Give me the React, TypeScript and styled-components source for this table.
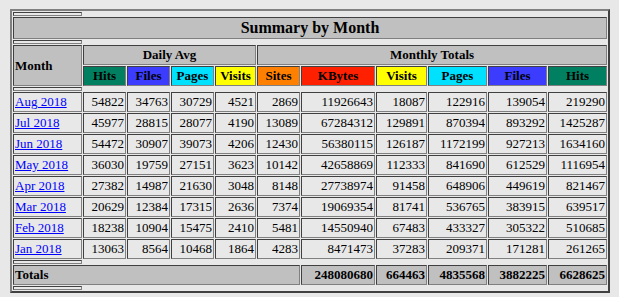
import React from 'react';
import styled, { createGlobalStyle } from 'styled-components';

const GlobalStyle = createGlobalStyle`
  html, body {
    margin: 0;
    padding: 0;
    background: #e8e8e8;
    font-family: "Liberation Serif", "Times New Roman", serif;
    color: #000;
  }
`;

const Page = styled.div`
  padding: 9px 0 0 10px;
`;

const SummaryTable = styled.table`
  width: 600px;
  table-layout: fixed;
  border-collapse: separate;
  border-spacing: 1px;
  border: 2px solid;
  border-color: #808080 #404040 #404040 #808080;
  background: #e8e8e8;
  font-size: 13px;
  line-height: 16px;
`;

const Col = styled.col<{ $w: number }>`
  width: ${(p) => p.$w}px;
`;

const cellBorder = `
  border: 1px solid;
  border-color: #404040 #808080 #808080 #404040;
  padding: 1px;
  overflow: hidden;
`;

const Spacer = styled.th`
  ${cellBorder}
  height: 4px;
  padding: 0;
  box-sizing: border-box;
`;

const TitleCell = styled.th`
  ${cellBorder}
  background: #c0c0c0;
  text-align: center;
  font-size: 16px;
  line-height: 18px;
`;

const HeadCell = styled.th<{ $align?: string }>`
  ${cellBorder}
  background: #c0c0c0;
  text-align: ${(p) => p.$align || 'center'};
  font-weight: bold;
`;

const ColHead = styled.th<{ $bg: string }>`
  ${cellBorder}
  background: ${(p) => p.$bg};
  text-align: center;
  font-weight: bold;
`;

const MonthCell = styled.td`
  ${cellBorder}
  white-space: nowrap;
  text-align: left;
`;

const MonthLink = styled.a`
  color: #0000ff;
  text-decoration: underline;
`;

const NumCell = styled.td`
  ${cellBorder}
  text-align: right;
`;

const TotalCell = styled.th`
  ${cellBorder}
  background: #c0c0c0;
  text-align: right;
`;

const HITS = '#008060';
const FILES = '#3c3cff';
const PAGES = '#00e0ff';
const VISITS = '#ffff00';
const SITES = '#ff8000';
const KBYTES = '#ff2000';

const colWidths = [69, 43, 43, 43, 41, 43, 74, 51, 59, 59, 59];

const months: [string, number[]][] = [
  ['Aug 2018', [54822, 34763, 30729, 4521, 2869, 11926643, 18087, 122916, 139054, 219290]],
  ['Jul 2018', [45977, 28815, 28077, 4190, 13089, 67284312, 129891, 870394, 893292, 1425287]],
  ['Jun 2018', [54472, 30907, 39073, 4206, 12430, 56380115, 126187, 1172199, 927213, 1634160]],
  ['May 2018', [36030, 19759, 27151, 3623, 10142, 42658869, 112333, 841690, 612529, 1116954]],
  ['Apr 2018', [27382, 14987, 21630, 3048, 8148, 27738974, 91458, 648906, 449619, 821467]],
  ['Mar 2018', [20629, 12384, 17315, 2636, 7374, 19069354, 81741, 536765, 383915, 639517]],
  ['Feb 2018', [18238, 10904, 15475, 2410, 5481, 14550940, 67483, 433327, 305322, 510685]],
  ['Jan 2018', [13063, 8564, 10468, 1864, 4283, 8471473, 37283, 209371, 171281, 261265]],
];

const totals = [248080680, 664463, 4835568, 3882225, 6628625];

const SpacerRow = () => (
  <tr>
    <Spacer />
  </tr>
);

const App = () => {
  return (
    <Page>
      <GlobalStyle />
      <SummaryTable>
        <colgroup>
          {colWidths.map((w, i) => (
            <Col key={i} $w={w} />
          ))}
        </colgroup>
        <tbody>
          <SpacerRow />
          <tr>
            <TitleCell colSpan={11}>Summary by Month</TitleCell>
          </tr>
          <SpacerRow />
          <tr>
            <HeadCell rowSpan={2} $align="left">Month</HeadCell>
            <HeadCell colSpan={4}>Daily Avg</HeadCell>
            <HeadCell colSpan={6}>Monthly Totals</HeadCell>
          </tr>
          <tr>
            <ColHead $bg={HITS}>Hits</ColHead>
            <ColHead $bg={FILES}>Files</ColHead>
            <ColHead $bg={PAGES}>Pages</ColHead>
            <ColHead $bg={VISITS}>Visits</ColHead>
            <ColHead $bg={SITES}>Sites</ColHead>
            <ColHead $bg={KBYTES}>KBytes</ColHead>
            <ColHead $bg={VISITS}>Visits</ColHead>
            <ColHead $bg={PAGES}>Pages</ColHead>
            <ColHead $bg={FILES}>Files</ColHead>
            <ColHead $bg={HITS}>Hits</ColHead>
          </tr>
          <SpacerRow />
          {months.map(([name, vals]) => (
            <tr key={name}>
              <MonthCell>
                <MonthLink href="#">{name}</MonthLink>
              </MonthCell>
              {vals.map((v, i) => (
                <NumCell key={i}>{v}</NumCell>
              ))}
            </tr>
          ))}
          <SpacerRow />
          <tr>
            <HeadCell colSpan={6} $align="left">Totals</HeadCell>
            {totals.map((t, i) => (
              <TotalCell key={i}>{t}</TotalCell>
            ))}
          </tr>
          <SpacerRow />
        </tbody>
      </SummaryTable>
    </Page>
  );
};

export default App;
